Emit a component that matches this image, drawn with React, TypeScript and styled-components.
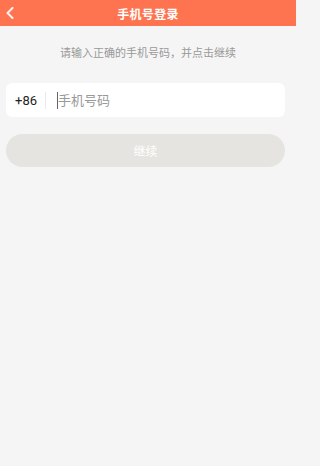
import styled, { createGlobalStyle } from 'styled-components';

const GlobalStyle = createGlobalStyle`
  html, body {
    margin: 0;
    padding: 0;
    background: #f5f5f5;
    font-family: Roboto, "Noto Sans CJK SC", sans-serif;
  }
`;

const Page = styled.div`
  width: 296px;
  min-height: 466px;
  background: #f5f5f5;
`;

const Header = styled.header`
  height: 26px;
  background: #fe7350;
  display: grid;
  grid-template-columns: 40px 1fr 40px;
  align-items: center;
`;

const Back = styled.button`
  border: 0;
  background: none;
  padding: 0 0 0 5px;
  height: 26px;
  display: flex;
  align-items: center;
  cursor: pointer;
`;

const Title = styled.h1`
  margin: 0;
  color: #fff;
  font-size: 12px;
  font-weight: 700;
  text-align: center;
  letter-spacing: 0.3px;
`;

const Hint = styled.p`
  margin: 20px 0 0;
  line-height: 16px;
  font-size: 11px;
  color: #999;
  text-align: center;
`;

const Field = styled.div`
  margin: 21px 11px 0 6px;
  height: 34px;
  background: #fff;
  border-radius: 6px;
  display: flex;
  align-items: center;
  padding-left: 9px;
`;

const Code = styled.span`
  font-size: 13px;
  color: #222;
  padding-right: 8px;
  border-right: 1px solid #eaeaea;
  line-height: 17px;
`;

const Caret = styled.span`
  width: 1px;
  height: 17px;
  background: #666;
  margin-left: 11px;
`;

const PhoneInput = styled.input`
  flex: 1;
  min-width: 0;
  border: 0;
  outline: none;
  background: transparent;
  margin: 0;
  font-size: 13px;
  font-family: inherit;
  color: #333;
  padding: 0;

  &::placeholder {
    color: #999;
  }
`;

const Submit = styled.button<{ $active?: boolean }>`
  display: block;
  margin: 17px 11px 0 6px;
  width: calc(100% - 17px);
  height: 33px;
  border: 0;
  border-radius: 17px;
  background: ${(p) => (p.$active ? '#fe7350' : '#e5e4e0')};
  color: #fff;
  font-size: 12px;
  font-family: inherit;
`;

export default function App() {
  return (
    <Page>
      <GlobalStyle />
      <Header>
        <Back aria-label="返回">
          <svg width="10" height="12" viewBox="0 0 10 12">
            <path d="M7.5 1 L2.5 6 L7.5 11" fill="none" stroke="#fff" strokeWidth="2" strokeLinecap="round" strokeLinejoin="round" opacity="0.9" />
          </svg>
        </Back>
        <Title>手机号登录</Title>
        <span />
      </Header>
      <Hint>请输入正确的手机号码，并点击继续</Hint>
      <Field>
        <Code>+86</Code>
        <Caret />
        <PhoneInput placeholder="手机号码" />
      </Field>
      <Submit disabled>继续</Submit>
    </Page>
  );
}
